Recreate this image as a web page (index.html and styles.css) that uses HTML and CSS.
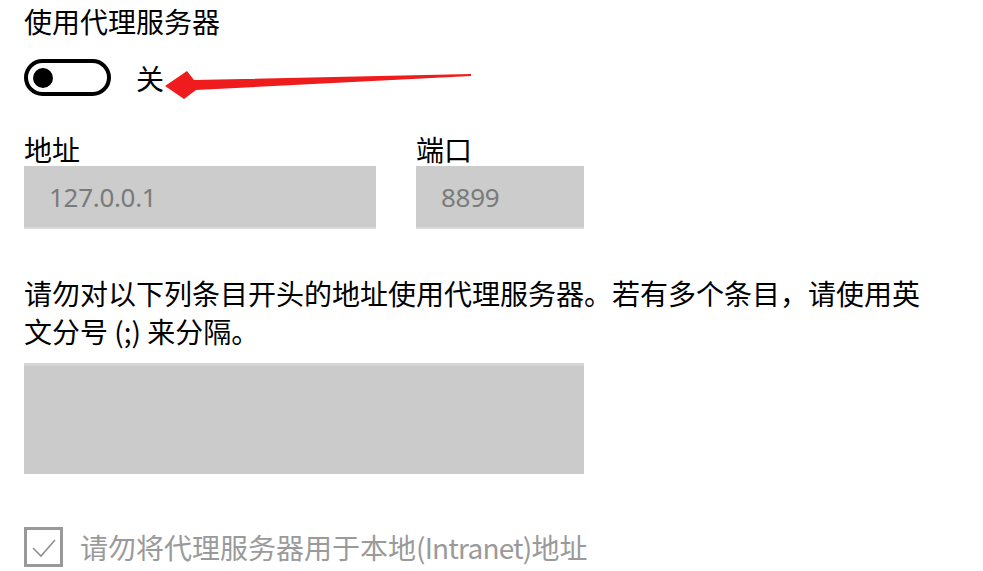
FILE: index.html
```html
<!DOCTYPE html>
<html lang="zh-CN">
<head>
    <meta charset="utf-8">
    <title>代理</title>
    <link rel="stylesheet" href="styles.css">
</head>
<body>
    <div class="page">
        <h2 class="titolo">使用代理服务器</h2>
        <div class="toggle-row">
            <div class="toggle"><span class="knob"></span></div>
            <span class="stato">关</span>
        </div>
        <div class="campi">
            <div class="campo indirizzo">
                <div class="etichetta">地址</div>
                <div class="input">127.0.0.1</div>
            </div>
            <div class="campo porta">
                <div class="etichetta">端口</div>
                <div class="input">8899</div>
            </div>
        </div>
        <p class="nota">请勿对以下列条目开头的地址使用代理服务器。若有多个条目，请使用英文分号 (;) 来分隔。</p>
        <div class="area"></div>
        <div class="check-row">
            <span class="check">
                <svg width="33" height="34" viewBox="0 0 33 34">
                    <polyline points="6,18 14,26 28,10" fill="none" stroke="#8f8f8f" stroke-width="1.6"/>
                </svg>
            </span>
            <span class="check-testo">请勿将代理服务器用于本地<span class="latino">(Intranet)</span>地址</span>
        </div>
    </div>
    <svg class="freccia" width="983" height="571" viewBox="0 0 983 571">
        <polygon points="165,86 187,71 194,80 471,74 471,76 196,90 184,99" fill="#ee1c1c"/>
    </svg>
</body>
</html>
```

FILE: styles.css
```css
body {
    margin: 0;
    background: #fff;
    font-family: "Noto Sans CJK SC", sans-serif;
    color: #000;
}
.page {
    padding-left: 24px;
}
.titolo {
    margin: 2px 0 0;
    font-size: 28px;
    font-weight: normal;
    line-height: 38px;
}
.toggle-row {
    display: flex;
    align-items: center;
    gap: 25px;
    margin-top: 19px;
}
.toggle {
    width: 87px;
    height: 37px;
    box-sizing: border-box;
    border: 4px solid #000;
    border-radius: 19px;
    display: flex;
    align-items: center;
    padding-left: 5px;
}
.knob {
    width: 20px;
    height: 20px;
    border-radius: 50%;
    background: #000;
}
.stato {
    font-size: 28px;
    line-height: 36px;
}
.campi {
    display: flex;
    gap: 40px;
    margin-top: 36px;
}
.indirizzo {
    width: 352px;
}
.porta {
    width: 168px;
}
.etichetta {
    font-size: 28px;
    line-height: 34px;
}
.input {
    height: 63px;
    box-sizing: border-box;
    background: #cccccc;
    border-bottom: 2px solid #d9d9d9;
    display: flex;
    align-items: center;
    padding-left: 25px;
    font-family: "Noto Sans", sans-serif;
    font-size: 26px;
    letter-spacing: -0.3px;
    color: #7a7a7a;
}
.nota {
    width: 905px;
    margin: 45px 0 0;
    font-size: 28px;
    line-height: 38px;
}
.latino {
    letter-spacing: -0.8px;
}
.area {
    width: 560px;
    height: 111px;
    box-sizing: border-box;
    margin-top: 13px;
    background: #cbcbcb;
    border-top: 3px solid #d4d4d4;
}
.check-row {
    display: flex;
    align-items: center;
    gap: 17px;
    margin-top: 53px;
}
.check {
    width: 39px;
    height: 40px;
    box-sizing: border-box;
    border: 3px solid #999;
    display: flex;
}
.check-testo {
    font-size: 28px;
    line-height: 40px;
    color: #9a9a9a;
}
.freccia {
    position: absolute;
    left: 0;
    top: 0;
    pointer-events: none;
}
```
